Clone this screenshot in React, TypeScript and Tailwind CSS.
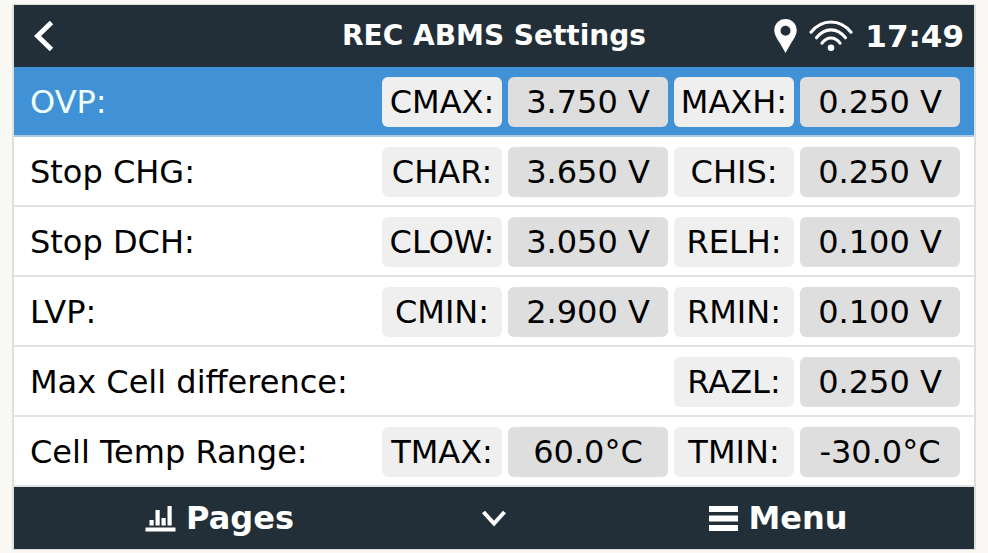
import { clsx } from "clsx";
import { useState } from "react";

interface Setting {
  name: string;
  value: string;
}

interface SettingRow {
  label: string;
  settings: Setting[];
}

const rows: SettingRow[] = [
  {
    label: "OVP:",
    settings: [
      { name: "CMAX:", value: "3.750 V" },
      { name: "MAXH:", value: "0.250 V" },
    ],
  },
  {
    label: "Stop CHG:",
    settings: [
      { name: "CHAR:", value: "3.650 V" },
      { name: "CHIS:", value: "0.250 V" },
    ],
  },
  {
    label: "Stop DCH:",
    settings: [
      { name: "CLOW:", value: "3.050 V" },
      { name: "RELH:", value: "0.100 V" },
    ],
  },
  {
    label: "LVP:",
    settings: [
      { name: "CMIN:", value: "2.900 V" },
      { name: "RMIN:", value: "0.100 V" },
    ],
  },
  {
    label: "Max Cell difference:",
    settings: [{ name: "RAZL:", value: "0.250 V" }],
  },
  {
    label: "Cell Temp Range:",
    settings: [
      { name: "TMAX:", value: "60.0°C" },
      { name: "TMIN:", value: "-30.0°C" },
    ],
  },
];

export default function App() {
  const [selected, setSelected] = useState(0);

  return (
    <div className="min-h-screen bg-[#faf8f4] px-3 pt-1 font-['DejaVu_Sans',sans-serif]">
      <main className="border-x-2 border-y border-[#dfdfdc] bg-white">
        <Header />
        <ul>
          {rows.map((row, i) => (
            <Row
              key={row.label}
              row={row}
              active={i === selected}
              onSelect={() => setSelected(i)}
            />
          ))}
        </ul>
        <Footer />
      </main>
    </div>
  );
}

function Header() {
  return (
    <header className="grid grid-cols-[1fr_auto_1fr] items-center bg-[#222f38] px-2.5 py-[7px] text-white">
      <button type="button" aria-label="Back" className="justify-self-start px-2.5">
        <svg width="20" height="32" viewBox="0 0 20 32" fill="none" aria-hidden="true">
          <path d="M17.5 2.5 3.5 16l14 13.5" stroke="currentColor" strokeWidth="5" />
        </svg>
      </button>
      <h1 className="text-[28px] leading-12 font-bold">REC ABMS Settings</h1>
      <div className="flex items-center justify-end gap-3">
        <svg width="23" height="34" viewBox="0 0 23 34" aria-hidden="true">
          <path
            fill="currentColor"
            fillRule="evenodd"
            d="M11.5 0C5.1 0 .3 4.9.3 11.2c0 4.6 2.7 8.2 5.7 13.1L11.5 34 17 24.3c3-4.9 5.7-8.5 5.7-13.1C22.7 4.9 17.900 0 11.5 0Zm0 6.800a5 5 0 1 1 0 10 5 5 0 0 1 0-10Z"
          />
        </svg>
        <svg
          width="44"
          height="32"
          viewBox="0 0 44 32"
          fill="none"
          stroke="currentColor"
          strokeWidth="3.1"
          strokeLinecap="round"
          aria-hidden="true"
        >
          <path d="M2 12.2C13-1.4 31-1.4 42 12.2" />
          <path d="M7.5 17.8c8.2-10.600 20.800-10.600 29 0" />
          <path d="M13 23.2c5-7 13-7 18 0" />
          <circle cx="22" cy="27.8" r="3.300" fill="currentColor" stroke="none" />
        </svg>
        <time className="text-[31px] leading-12 font-bold">17:49</time>
      </div>
    </header>
  );
}

function Row({
  row,
  active,
  onSelect,
}: {
  row: SettingRow;
  active: boolean;
  onSelect: () => void;
}) {
  return (
    <li
      onClick={onSelect}
      className={clsx(
        "flex items-center justify-between border-b-2 pt-2.5 pr-3.5 pb-2 pl-4 text-[32px] leading-[50px]",
        active
          ? "border-[#a9c9e6] bg-[#4091d5] text-[#f0ffff]"
          : "border-[#e2e2e2] text-black"
      )}
    >
      <span>{row.label}</span>
      <div className="flex gap-1.5">
        {row.settings.map((setting) => (
          <div key={setting.name} className="flex gap-1.5 text-center text-black">
            <span className="w-30 rounded-md bg-[#efefef]">{setting.name}</span>
            <button
              type="button"
              aria-label={`${setting.name} ${setting.value}`}
              className="w-40 rounded-md bg-[#dedede]"
            >
              {setting.value}
            </button>
          </div>
        ))}
      </div>
    </li>
  );
}

function Footer() {
  return (
    <footer className="grid grid-cols-[1fr_auto_1fr] items-center bg-[#222f38] py-[7px] text-[32px] leading-12 font-bold text-white">
      <button type="button" className="flex items-center justify-center gap-2.5 pr-14">
        <svg width="31" height="27" viewBox="0 0 31 27" fill="currentColor" aria-hidden="true">
          <path d="M4.500 15h4.200v5.500H4.500zM10.500 5h4.200v15.500h-4.200zM16.500 13h4.200v7.500h-4.200zM22.500 1h4.200v19.500h-4.200zM.5 22.500h30v4H.5z" />
        </svg>
        Pages
      </button>
      <button type="button" aria-label="Next page">
        <svg width="26" height="18" viewBox="0 0 26 18" fill="none" aria-hidden="true">
          <path d="M2.500 3 13 14.500 23.500 3" stroke="currentColor" strokeWidth="4" />
        </svg>
      </button>
      <button type="button" className="flex items-center justify-center gap-2.5 pl-19">
        <svg width="29" height="25" viewBox="0 0 29 25" fill="currentColor" aria-hidden="true">
          <path d="M0 0h29v6H0zM0 9.500h29v6H0zM0 19h29v6H0z" />
        </svg>
        Menu
      </button>
    </footer>
  );
}
